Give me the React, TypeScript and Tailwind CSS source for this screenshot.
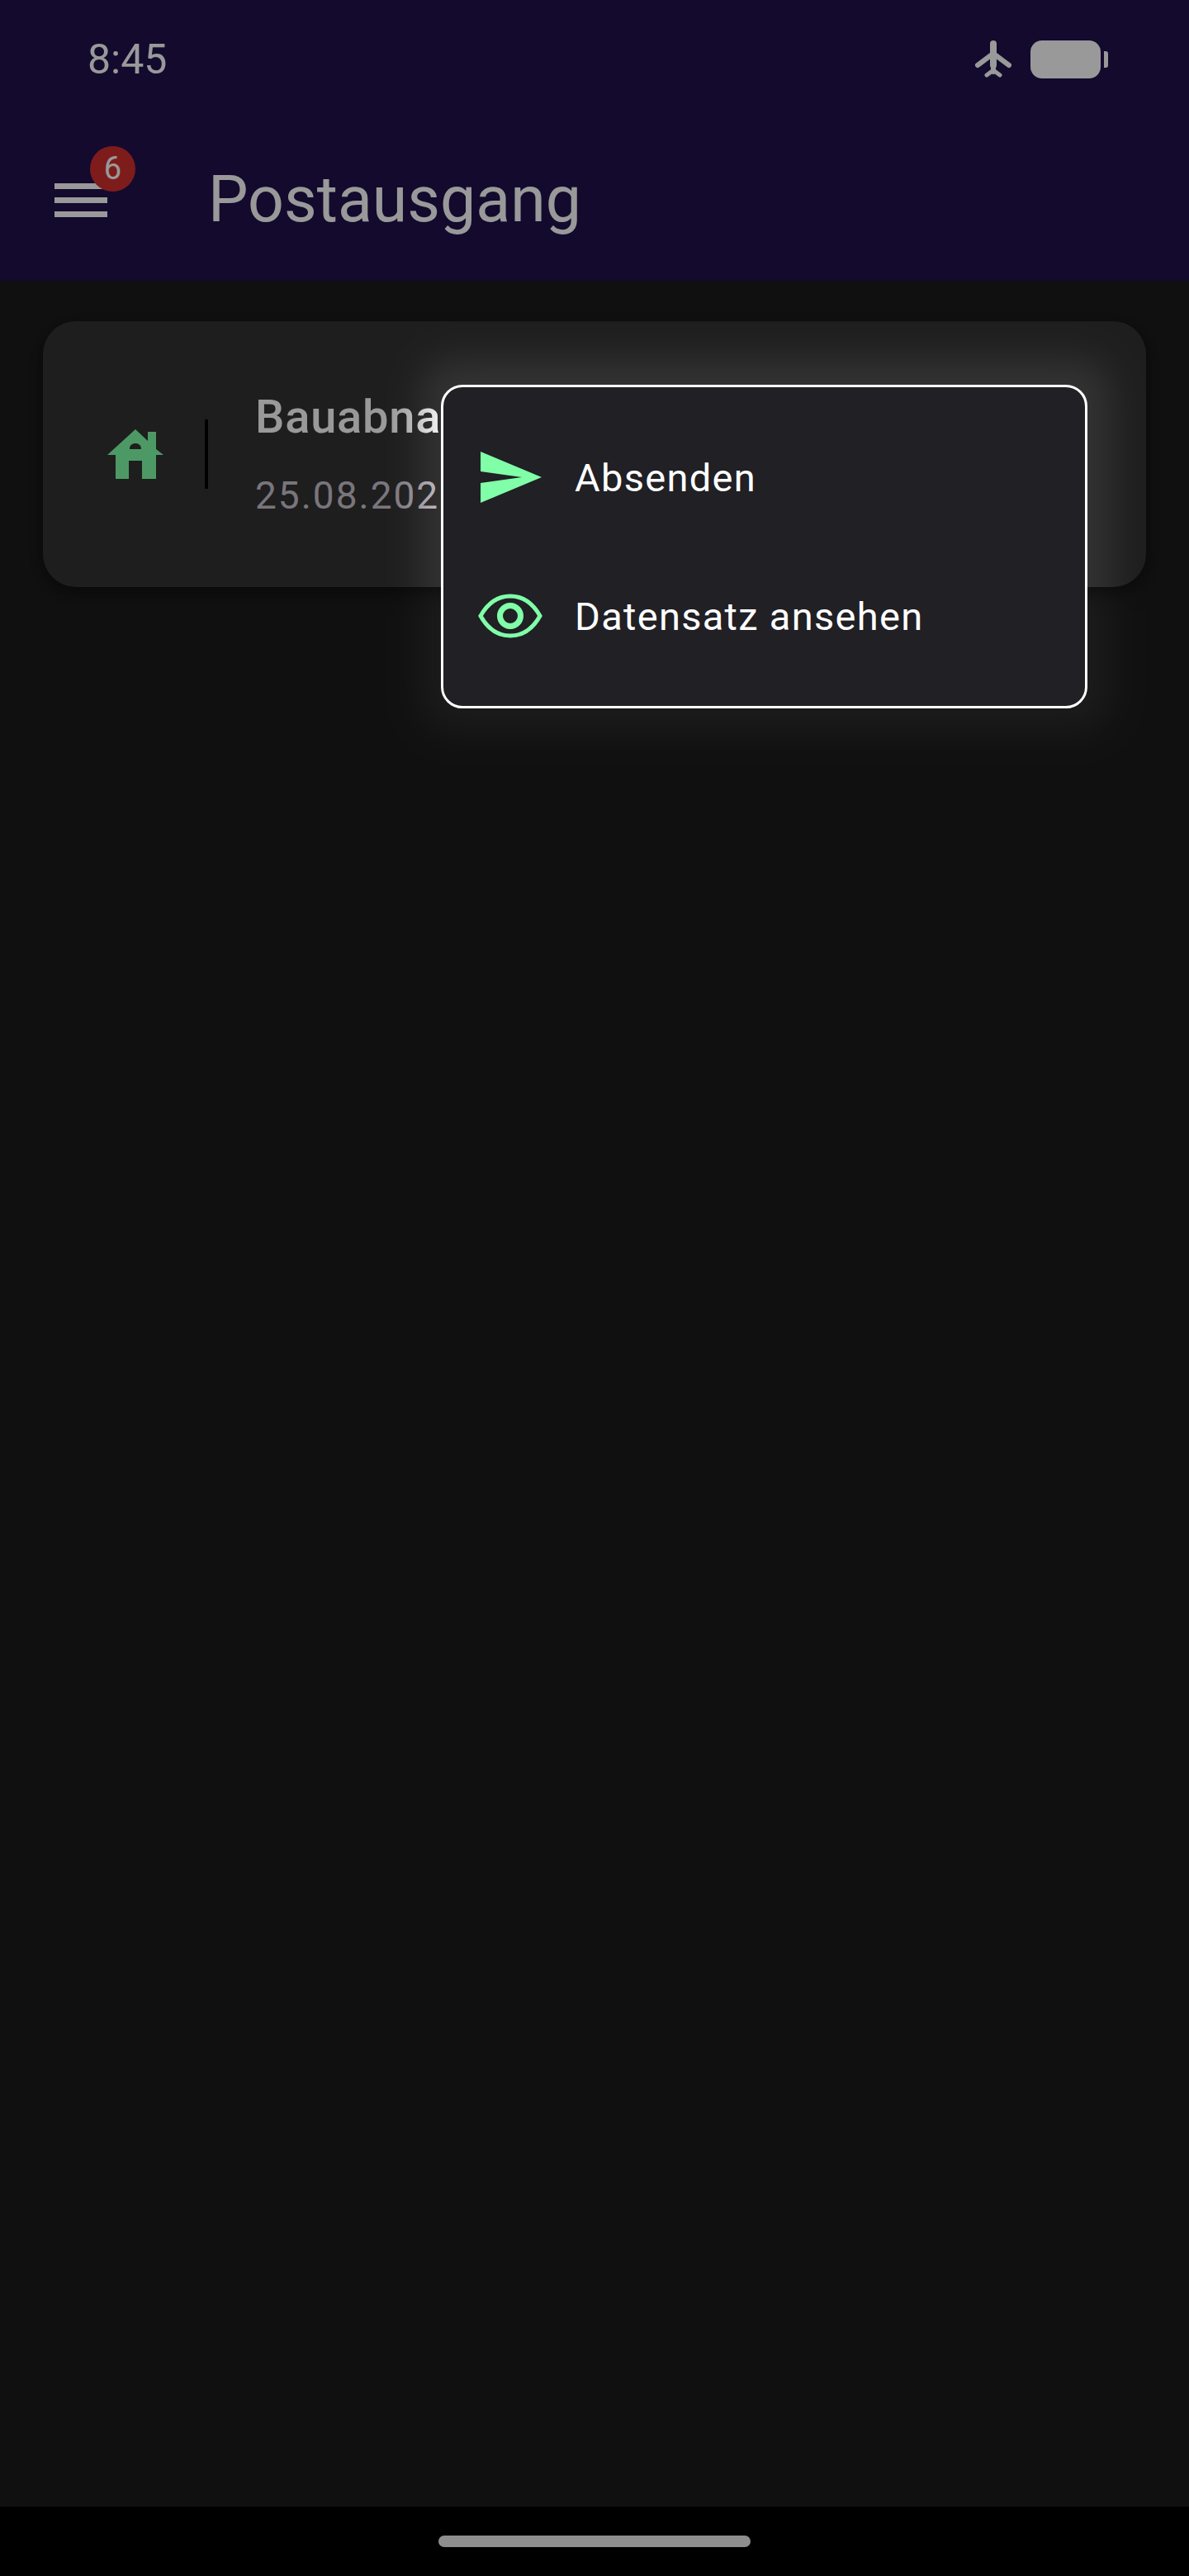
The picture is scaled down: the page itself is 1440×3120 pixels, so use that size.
const font = { fontFamily: 'Roboto, sans-serif' };

function PlaneIcon() {
  return (
    <svg width="46" height="46" viewBox="0 0 46 46" fill="none" stroke="#ffffff" strokeLinecap="round" strokeLinejoin="round">
      <path d="M23 4 V30" strokeWidth="8" />
      <path d="M20 18 L4 30 M26 18 L42 30" strokeWidth="6" />
      <path d="M23 36 L15 42 M23 36 L31 42" strokeWidth="5" />
      <path d="M23 26 V38" strokeWidth="6" />
    </svg>
  );
}

function HouseIcon() {
  return (
    <svg width="68" height="60" viewBox="0 0 68 60" fill="#80ffa8">
      <path
        fillRule="evenodd"
        d="M34 0 L49 14 V3 H59 V24 L68 31 H59 V60 H42 V38 H26 V60 H10 V31 H0 Z M27 24 C27 19 30 17 34 17 C38 17 41 19 41 24 Z"
      />
    </svg>
  );
}

function SendIcon() {
  return (
    <svg width="78" height="62" viewBox="0 0 78 62" fill="#80ffa8">
      <path d="M3 0 L77 31 L3 62 V38 L53 31 L3 24 Z" />
    </svg>
  );
}

function EyeIcon() {
  return (
    <svg width="78" height="54" viewBox="0 0 78 54" fill="none" stroke="#80ffa8">
      <path d="M3 27 C12 11 24 3 39 3 C54 3 66 11 75 27 C66 43 54 51 39 51 C24 51 12 43 3 27 Z" strokeWidth="5" />
      <circle cx="39" cy="27" r="12.5" strokeWidth="7" />
    </svg>
  );
}

export default function App() {
  return (
    <div className="relative flex flex-col w-[1440px] h-[3120px] overflow-hidden bg-[#1c1c1c]" style={font}>
      {/* Header */}
      <header className="relative z-10 h-[340px] bg-[#20114d] text-white">
        <div className="flex items-center justify-between h-[144px] pl-[106px] pr-[98px]">
          <span className="text-[50px] leading-none">8:45</span>
          <div className="flex items-center">
            <PlaneIcon />
            <div className="w-[85px] h-[46px] rounded-[14px] bg-white ml-[22px]" />
            <div className="w-[5px] h-[20px] rounded-r-[3px] bg-white ml-[4px]" />
          </div>
        </div>
        <div className="flex items-center h-[196px] pl-[66px]">
          <div className="relative flex flex-col gap-[10px] w-[64px]">
            <div className="h-[7px] bg-white" />
            <div className="h-[7px] bg-white" />
            <div className="h-[7px] bg-white" />
            <span className="absolute left-[43px] top-[-45px] w-[55px] h-[55px] rounded-full bg-[#d32f2f] flex items-center justify-center text-[38px] leading-none">
              6
            </span>
          </div>
          <h1 className="ml-[122px] text-[77px] leading-none font-normal">Postausgang</h1>
        </div>
      </header>

      {/* List */}
      <main className="flex-1 px-[52px] pt-[49px]">
        <div className="flex items-center h-[322px] rounded-[40px] bg-[#333333] pl-[78px] shadow-[0_6px_24px_rgba(0,0,0,0.5)]">
          <HouseIcon />
          <div className="w-[4px] h-[84px] bg-black ml-[50px]" />
          <div className="ml-[57px] text-white">
            <p className="text-[56px] leading-[64px] font-medium tracking-[0.8px]">Bauabnahme</p>
            <p className="mt-[36px] text-[46px] leading-[54px] tracking-[2px] text-[#cbc4cf]">25.08.2023</p>
          </div>
        </div>
      </main>

      {/* Nav bar */}
      <div className="flex items-center justify-center h-[84px] bg-black">
        <div className="w-[378px] h-[14px] rounded-full bg-[#ededed]" />
      </div>

      {/* Scrim: blurred frame, open around the menu */}
      <div className="absolute z-20 box-content left-[-2690px] top-[-2765px] w-[835px] h-[450px] rounded-[3240px] border-[3200px] border-black/40 blur-[22px]" />

      {/* Popup menu */}
      <div className="absolute z-30 left-[534px] top-[466px] w-[783px] h-[392px] py-[25px] rounded-[26px] border-[3px] border-white bg-[#202025] text-white">
        <div className="flex items-center h-[168px] pl-[42px] gap-[39px]">
          <SendIcon />
          <span className="text-[47px] leading-none tracking-[1.3px]">Absenden</span>
        </div>
        <div className="flex items-center h-[168px] pl-[42px] gap-[39px]">
          <EyeIcon />
          <span className="text-[47px] leading-none tracking-[1.3px]">Datensatz ansehen</span>
        </div>
      </div>
    </div>
  );
}
